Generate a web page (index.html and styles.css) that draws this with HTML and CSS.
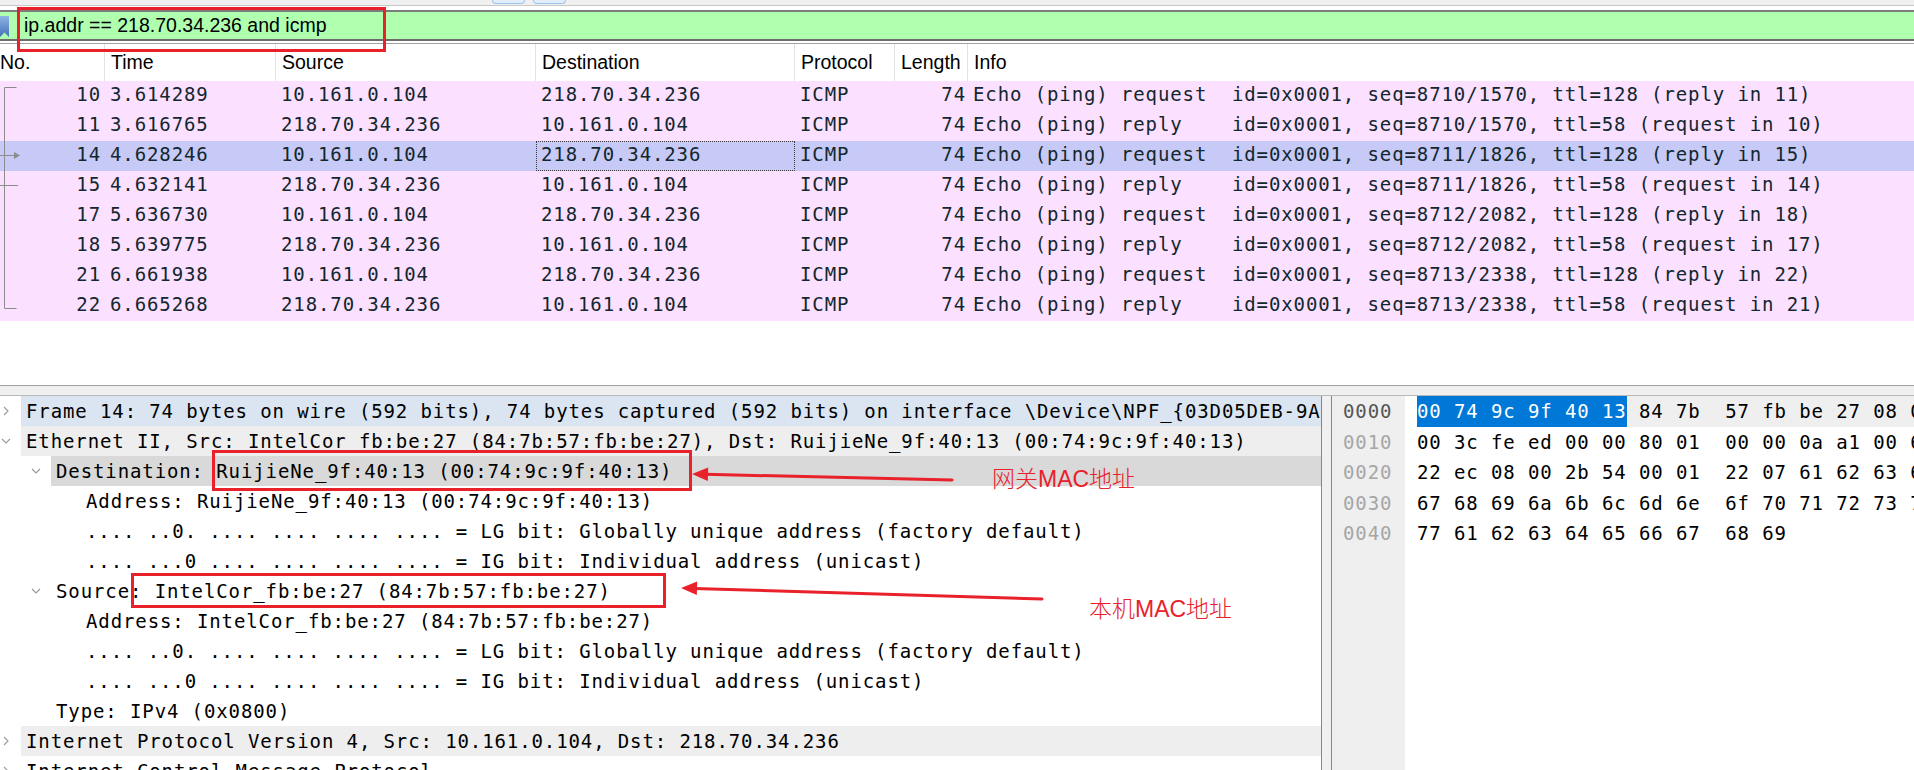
FILE: index.html
```html
<!DOCTYPE html>
<html>
<head>
<meta charset="utf-8">
<link rel="stylesheet" href="styles.css">
</head>
<body>
<div class="app">
  <div class="topstrip"><span class="tbtn"></span><span class="tbtn"></span></div>
  <div class="filterwrap">
    <div class="filterbar">
      <svg class="bm" width="9" height="21" viewBox="0 0 9 21">
        <defs><linearGradient id="bmg" x1="0" y1="0" x2="0" y2="1"><stop offset="0" stop-color="#8fb3e3"/><stop offset="1" stop-color="#4472b8"/></linearGradient></defs>
        <path d="M0 0 H9 V21 L4.5 16.5 L0 21 Z" fill="url(#bmg)"/>
      </svg>
      <div class="filtertext">ip.addr == 218.70.34.236 and icmp</div>
    </div>
    <div class="filterunder"></div>
  </div>

  <div class="plist">
    <div class="phead">
      <div class="hc hno">No.</div>
      <div class="hc">Time</div>
      <div class="hc">Source</div>
      <div class="hc">Destination</div>
      <div class="hc">Protocol</div>
      <div class="hc">Length</div>
      <div class="hc hlast">Info</div>
    </div>
    <div class="prows">
      <svg class="tree" width="24" height="240" viewBox="0 0 24 240">
        <g stroke="#8c8c8c" stroke-width="1" fill="none">
          <path d="M4.5 6.5 H16.5"/>
          <path d="M4.5 6.5 V227.5 H16.5"/>
          <path d="M0 74.5 H15"/>
          <path d="M0 104.5 H18"/>
        </g>
        <path d="M14 71 L20 74.5 L14 78 Z" fill="#8c8c8c"/>
      </svg>
      <div class="prow"><div class="c cno">10</div><div class="c">3.614289</div><div class="c">10.161.0.104</div><div class="c">218.70.34.236</div><div class="c">ICMP</div><div class="c clen">74</div><div class="c cinfo">Echo (ping) request  id=0x0001, seq=8710/1570, ttl=128 (reply in 11)</div></div>
      <div class="prow"><div class="c cno">11</div><div class="c">3.616765</div><div class="c">218.70.34.236</div><div class="c">10.161.0.104</div><div class="c">ICMP</div><div class="c clen">74</div><div class="c cinfo">Echo (ping) reply    id=0x0001, seq=8710/1570, ttl=58 (request in 10)</div></div>
      <div class="prow sel"><div class="c cno">14</div><div class="c">4.628246</div><div class="c">10.161.0.104</div><div class="c focus">218.70.34.236</div><div class="c">ICMP</div><div class="c clen">74</div><div class="c cinfo">Echo (ping) request  id=0x0001, seq=8711/1826, ttl=128 (reply in 15)</div></div>
      <div class="prow"><div class="c cno">15</div><div class="c">4.632141</div><div class="c">218.70.34.236</div><div class="c">10.161.0.104</div><div class="c">ICMP</div><div class="c clen">74</div><div class="c cinfo">Echo (ping) reply    id=0x0001, seq=8711/1826, ttl=58 (request in 14)</div></div>
      <div class="prow"><div class="c cno">17</div><div class="c">5.636730</div><div class="c">10.161.0.104</div><div class="c">218.70.34.236</div><div class="c">ICMP</div><div class="c clen">74</div><div class="c cinfo">Echo (ping) request  id=0x0001, seq=8712/2082, ttl=128 (reply in 18)</div></div>
      <div class="prow"><div class="c cno">18</div><div class="c">5.639775</div><div class="c">218.70.34.236</div><div class="c">10.161.0.104</div><div class="c">ICMP</div><div class="c clen">74</div><div class="c cinfo">Echo (ping) reply    id=0x0001, seq=8712/2082, ttl=58 (request in 17)</div></div>
      <div class="prow"><div class="c cno">21</div><div class="c">6.661938</div><div class="c">10.161.0.104</div><div class="c">218.70.34.236</div><div class="c">ICMP</div><div class="c clen">74</div><div class="c cinfo">Echo (ping) request  id=0x0001, seq=8713/2338, ttl=128 (reply in 22)</div></div>
      <div class="prow"><div class="c cno">22</div><div class="c">6.665268</div><div class="c">218.70.34.236</div><div class="c">10.161.0.104</div><div class="c">ICMP</div><div class="c clen">74</div><div class="c cinfo">Echo (ping) reply    id=0x0001, seq=8713/2338, ttl=58 (request in 21)</div></div>
    </div>
  </div>

  <div class="hsplit"></div>

  <div class="bottom">
    <div class="details">
      <div class="drow l0"><span class="chev"><svg width="10" height="10" viewBox="0 0 10 10"><path d="M3 1 L7 5 L3 9" /></svg></span><span class="dtxt bg-blue">Frame 14: 74 bytes on wire (592 bits), 74 bytes captured (592 bits) on interface \Device\NPF_{03D05DEB-9A</span></div>
      <div class="drow l0"><span class="chev"><svg width="10" height="10" viewBox="0 0 10 10"><path d="M1 3 L5 7 L9 3" /></svg></span><span class="dtxt bg-gray">Ethernet II, Src: IntelCor_fb:be:27 (84:7b:57:fb:be:27), Dst: RuijieNe_9f:40:13 (00:74:9c:9f:40:13)</span></div>
      <div class="drow l1"><span class="chev"><svg width="10" height="10" viewBox="0 0 10 10"><path d="M1 3 L5 7 L9 3" /></svg></span><span class="dtxt bg-dark">Destination: RuijieNe_9f:40:13 (00:74:9c:9f:40:13)</span></div>
      <div class="drow l2"><span class="chev"></span><span class="dtxt">Address: RuijieNe_9f:40:13 (00:74:9c:9f:40:13)</span></div>
      <div class="drow l2"><span class="chev"></span><span class="dtxt">.... ..0. .... .... .... .... = LG bit: Globally unique address (factory default)</span></div>
      <div class="drow l2"><span class="chev"></span><span class="dtxt">.... ...0 .... .... .... .... = IG bit: Individual address (unicast)</span></div>
      <div class="drow l1"><span class="chev"><svg width="10" height="10" viewBox="0 0 10 10"><path d="M1 3 L5 7 L9 3" /></svg></span><span class="dtxt">Source: IntelCor_fb:be:27 (84:7b:57:fb:be:27)</span></div>
      <div class="drow l2"><span class="chev"></span><span class="dtxt">Address: IntelCor_fb:be:27 (84:7b:57:fb:be:27)</span></div>
      <div class="drow l2"><span class="chev"></span><span class="dtxt">.... ..0. .... .... .... .... = LG bit: Globally unique address (factory default)</span></div>
      <div class="drow l2"><span class="chev"></span><span class="dtxt">.... ...0 .... .... .... .... = IG bit: Individual address (unicast)</span></div>
      <div class="drow l1"><span class="chev"></span><span class="dtxt">Type: IPv4 (0x0800)</span></div>
      <div class="drow l0"><span class="chev"><svg width="10" height="10" viewBox="0 0 10 10"><path d="M3 1 L7 5 L3 9" /></svg></span><span class="dtxt bg-gray">Internet Protocol Version 4, Src: 10.161.0.104, Dst: 218.70.34.236</span></div>
      <div class="drow l0"><span class="chev"><svg width="10" height="10" viewBox="0 0 10 10"><path d="M3 1 L7 5 L3 9" /></svg></span><span class="dtxt">Internet Control Message Protocol</span></div>
    </div>
    <div class="vsplit"></div>
    <div class="hex">
      <div class="offs">
        <div class="off cur">0000</div>
        <div class="off">0010</div>
        <div class="off">0020</div>
        <div class="off">0030</div>
        <div class="off">0040</div>
      </div>
      <div class="bytes">
        <div class="hl cur"><span class="hsel">00 74 9c 9f 40 13</span> 84 7b  57 fb be 27 08 00 45 00</div>
        <div class="hl">00 3c fe ed 00 00 80 01  00 00 0a a1 00 68 da 46</div>
        <div class="hl">22 ec 08 00 2b 54 00 01  22 07 61 62 63 64 65 66</div>
        <div class="hl">67 68 69 6a 6b 6c 6d 6e  6f 70 71 72 73 74 75 76</div>
        <div class="hl">77 61 62 63 64 65 66 67  68 69</div>
      </div>
    </div>
  </div>

  <div class="abox box-filter"></div>
  <div class="abox box-dst"></div>
  <div class="abox box-src"></div>
  <svg class="arrows" width="1914" height="770" viewBox="0 0 1914 770">
    <g stroke="#e8212b" stroke-width="3" stroke-linecap="round">
      <line x1="952" y1="480" x2="705" y2="474.3"/>
      <line x1="1042" y1="599" x2="694" y2="588.4"/>
    </g>
    <g fill="#e8212b">
      <path d="M692 474 L708.2 467.6 L707.8 481 Z"/>
      <path d="M681 588 L697.2 581.6 L696.8 595 Z"/>
    </g>
  </svg>
  <div class="alabel lab1">网关MAC地址</div>
  <div class="alabel lab2">本机MAC地址</div>
</div>
</body>
</html>
```

FILE: styles.css
```css
* { box-sizing: border-box; }
html, body { margin: 0; padding: 0; }
body {
  width: 1914px;
  height: 770px;
  overflow: hidden;
  background: #ffffff;
  font-family: "Liberation Sans", Arial, sans-serif;
}
.app {
  position: relative;
  width: 1914px;
  height: 770px;
  overflow: hidden;
}

/* top strip with clipped toolbar buttons */
.topstrip {
  height: 6px;
  background: #f0f0f0;
  border-bottom: 1px solid #c8c8c8;
  display: flex;
  gap: 8px;
  padding-left: 492px;
}
.tbtn {
  width: 33px;
  height: 4px;
  border: 1px solid #9fc4ea;
  border-top: none;
  border-radius: 0 0 4px 4px;
  background: #e2eefb;
}

/* display filter */
.filterwrap { padding-top: 4px; }
.filterbar {
  height: 31px;
  background: #afffaf;
  border-top: 2px solid #7c7c7c;
  border-bottom: 2px solid #6c6c6c;
  display: flex;
  align-items: center;
}
.bm { display: block; flex: none; margin-top: 2px; }
.filtertext {
  margin-left: 15px;
  font-size: 19.5px;
  color: #000;
  white-space: nowrap;
}
.filterunder {
  height: 3px;
  border-bottom: 1px solid #a0a0a0;
}

/* packet list */
.plist {
  height: 341px;
  overflow: hidden;
}
.phead,
.prow {
  display: grid;
  grid-template-columns: 105px 171px 260px 259px 100px 73px 1fr;
}
.phead {
  height: 37px;
  font-size: 19.5px;
  color: #000;
}
.hc {
  display: flex;
  align-items: center;
  padding-left: 6px;
  border-right: 1px solid #e3e3e3;
  white-space: nowrap;
}
.hno { padding-left: 0; }
.hlast { border-right: none; }

.prows { position: relative; }
.tree {
  position: absolute;
  left: 0;
  top: 0;
  z-index: 2;
}
.prow {
  height: 30px;
  background: #fce0ff;
  color: #12272e;
  font-family: "DejaVu Sans Mono", "Liberation Mono", monospace;
  font-size: 19px;
  letter-spacing: 0.89px;
}
.prow.sel { background: #c7caf6; }
.c {
  display: flex;
  align-items: center;
  padding-left: 5px;
  padding-bottom: 5px;
  white-space: pre;
  overflow: hidden;
}
.cno { justify-content: flex-end; padding-left: 0; padding-right: 4px; }
.clen { justify-content: flex-end; padding-left: 0; padding-right: 2px; }
.cinfo { overflow: hidden; }
.focus { outline: 1px dotted #3a3a3a; outline-offset: -1px; }

/* splitter */
.hsplit {
  height: 10px;
  background: #f0f0f0;
  border-top: 1px solid #a0a0a0;
}

/* bottom panes */
.bottom {
  display: flex;
  height: 375px;
  border-top: 1px solid #b8b8b8;
}
.details {
  width: 1322px;
  flex: none;
  border-right: 1px solid #84849a;
  overflow: hidden;
  font-family: "DejaVu Sans Mono", "Liberation Mono", monospace;
  font-size: 19px;
  letter-spacing: 0.89px;
  color: #000;
}
.drow {
  display: flex;
  height: 30px;
  white-space: pre;
}
.drow.l1 { padding-left: 30px; }
.drow.l2 { padding-left: 60px; }
.chev {
  width: 21px;
  flex: none;
  display: flex;
  align-items: center;
  padding-left: 1px;
}
.chev svg path {
  fill: none;
  stroke: #9a9a9a;
  stroke-width: 1.1;
}
.dtxt {
  flex: 1;
  display: flex;
  align-items: center;
  padding-left: 5px;
  overflow: hidden;
}
.bg-blue { background: #dae5f1; }
.bg-gray { background: #eeeeee; }
.bg-dark { background: #d9d9d9; }

.vsplit {
  width: 9px;
  flex: none;
  background: #f0f0f0;
}
.hex {
  flex: 1;
  display: flex;
  border-left: 1px solid #84849a;
  overflow: hidden;
  font-family: "DejaVu Sans Mono", "Liberation Mono", monospace;
  font-size: 19px;
  letter-spacing: 0.89px;
}
.offs {
  width: 73px;
  flex: none;
  background: #efefef;
  padding-left: 11px;
}
.off {
  height: 30.5px;
  display: flex;
  align-items: center;
  color: #a6a6a6;
}
.off.cur { color: #555555; }
.bytes {
  flex: 1;
  overflow: hidden;
}
.hl {
  height: 30.5px;
  margin-left: 12px;
  display: flex;
  align-items: center;
  white-space: pre;
  color: #000;
}
.hl.cur { background: #efefef; }
.hsel {
  background: #0078d7;
  color: #ffffff;
  height: 100%;
  display: inline-flex;
  align-items: center;
}

/* annotations */
.abox {
  position: absolute;
  border: 3px solid #e8212b;
}
.box-filter { left: 17px; top: 7px; width: 369px; height: 45px; }
.box-dst { left: 212px; top: 450px; width: 480px; height: 41px; }
.box-src { left: 131px; top: 573px; width: 535px; height: 35px; }
.arrows {
  position: absolute;
  left: 0;
  top: 0;
  pointer-events: none;
}
.alabel {
  position: absolute;
  color: #e8212b;
  font-family: "Liberation Sans", "Noto Sans CJK SC", sans-serif;
  font-size: 23px;
  font-weight: 300;
  line-height: 26px;
  white-space: nowrap;
}
.lab1 { left: 992px; top: 466px; }
.lab2 { left: 1089px; top: 596px; }
```
